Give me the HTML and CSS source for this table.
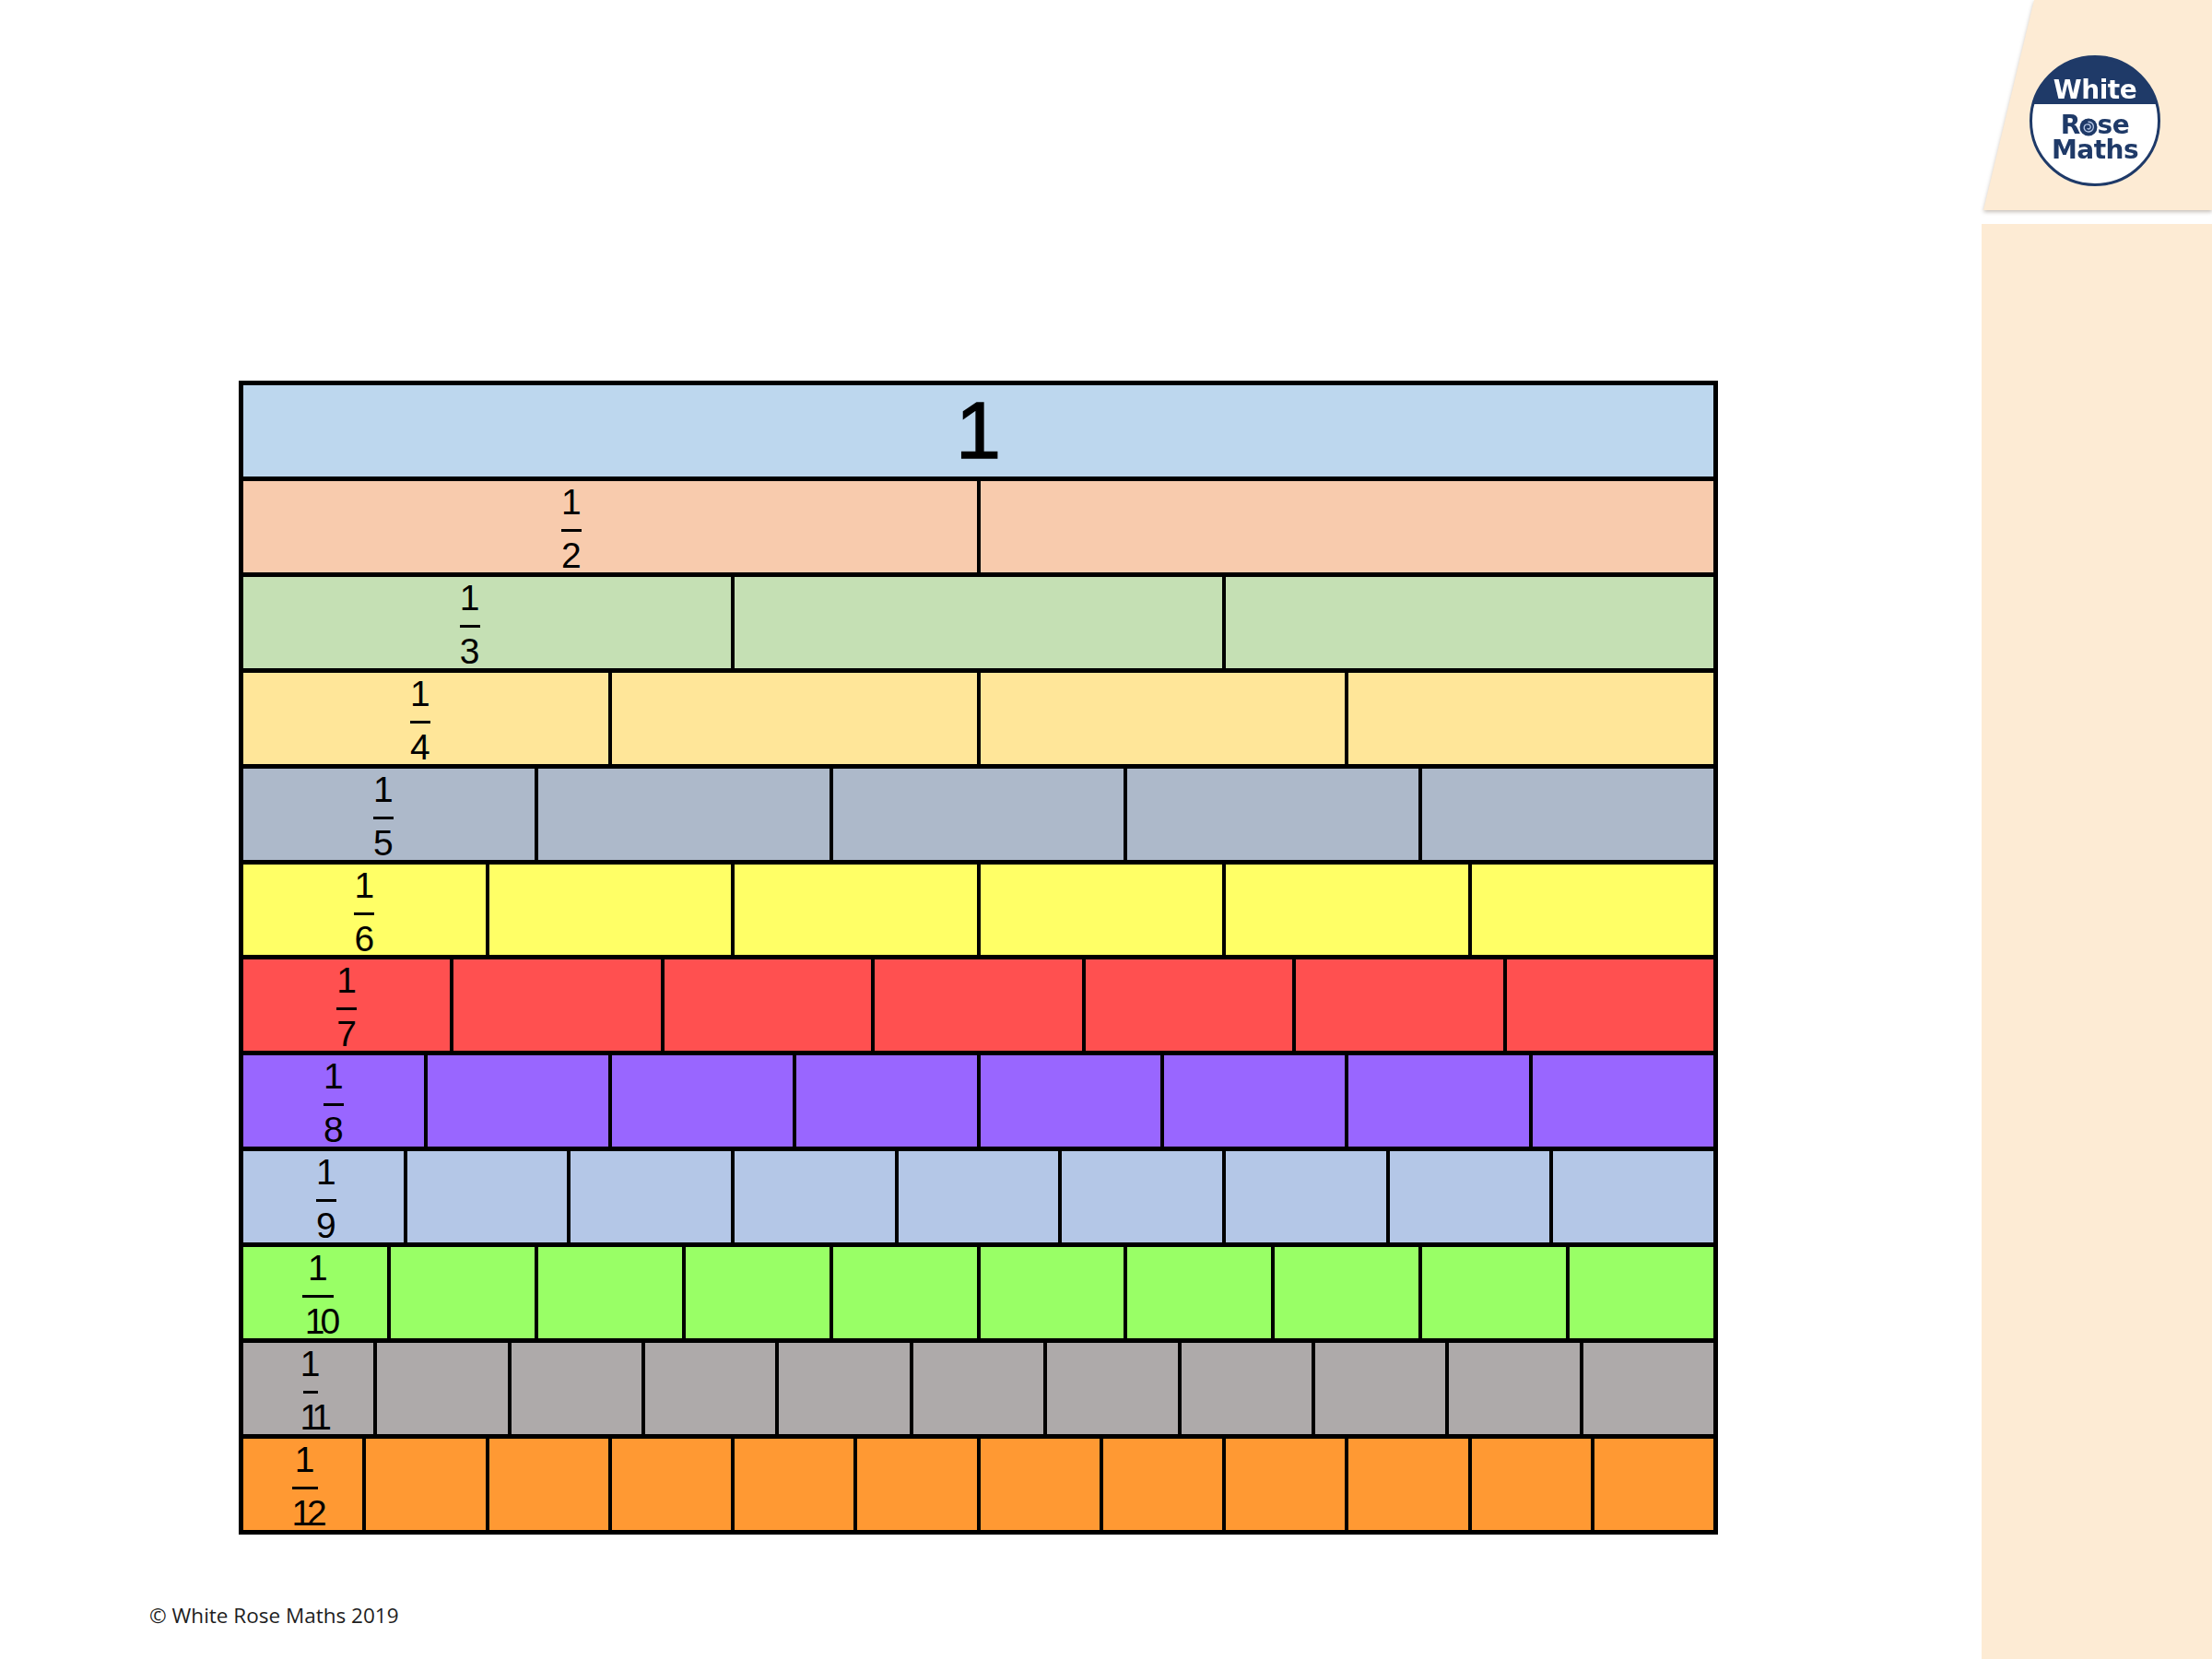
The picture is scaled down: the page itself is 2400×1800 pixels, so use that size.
FILE: index.html
```html
<!DOCTYPE html>
<html lang="en">
<head>
<meta charset="utf-8">
<title>Fraction Wall</title>
<link rel="stylesheet" href="styles.css">
</head>
<body>
<div class="page">
  <main class="main">
    <div class="wall">
      <div class="row r1"><div class="cell"><span class="one">1</span></div></div>
      <div class="row r2">
        <div class="cell"><span class="frac"><span class="num">1</span><span class="bar"></span><span class="den">2</span></span></div>
        <div class="cell"></div>
      </div>
      <div class="row r3">
        <div class="cell"><span class="frac"><span class="num">1</span><span class="bar"></span><span class="den">3</span></span></div>
        <div class="cell"></div><div class="cell"></div>
      </div>
      <div class="row r4">
        <div class="cell"><span class="frac"><span class="num">1</span><span class="bar"></span><span class="den">4</span></span></div>
        <div class="cell"></div><div class="cell"></div><div class="cell"></div>
      </div>
      <div class="row r5">
        <div class="cell"><span class="frac"><span class="num">1</span><span class="bar"></span><span class="den">5</span></span></div>
        <div class="cell"></div><div class="cell"></div><div class="cell"></div><div class="cell"></div>
      </div>
      <div class="row r6">
        <div class="cell"><span class="frac"><span class="num">1</span><span class="bar"></span><span class="den">6</span></span></div>
        <div class="cell"></div><div class="cell"></div><div class="cell"></div><div class="cell"></div><div class="cell"></div>
      </div>
      <div class="row r7">
        <div class="cell"><span class="frac"><span class="num">1</span><span class="bar"></span><span class="den">7</span></span></div>
        <div class="cell"></div><div class="cell"></div><div class="cell"></div><div class="cell"></div><div class="cell"></div><div class="cell"></div>
      </div>
      <div class="row r8">
        <div class="cell"><span class="frac"><span class="num">1</span><span class="bar"></span><span class="den">8</span></span></div>
        <div class="cell"></div><div class="cell"></div><div class="cell"></div><div class="cell"></div><div class="cell"></div><div class="cell"></div><div class="cell"></div>
      </div>
      <div class="row r9">
        <div class="cell"><span class="frac"><span class="num">1</span><span class="bar"></span><span class="den">9</span></span></div>
        <div class="cell"></div><div class="cell"></div><div class="cell"></div><div class="cell"></div><div class="cell"></div><div class="cell"></div><div class="cell"></div><div class="cell"></div>
      </div>
      <div class="row r10">
        <div class="cell"><span class="frac"><span class="num">1</span><span class="bar"></span><span class="den">10</span></span></div>
        <div class="cell"></div><div class="cell"></div><div class="cell"></div><div class="cell"></div><div class="cell"></div><div class="cell"></div><div class="cell"></div><div class="cell"></div><div class="cell"></div>
      </div>
      <div class="row r11">
        <div class="cell"><span class="frac"><span class="num">1</span><span class="bar"></span><span class="den">11</span></span></div>
        <div class="cell"></div><div class="cell"></div><div class="cell"></div><div class="cell"></div><div class="cell"></div><div class="cell"></div><div class="cell"></div><div class="cell"></div><div class="cell"></div><div class="cell"></div>
      </div>
      <div class="row r12">
        <div class="cell"><span class="frac"><span class="num">1</span><span class="bar"></span><span class="den">12</span></span></div>
        <div class="cell"></div><div class="cell"></div><div class="cell"></div><div class="cell"></div><div class="cell"></div><div class="cell"></div><div class="cell"></div><div class="cell"></div><div class="cell"></div><div class="cell"></div><div class="cell"></div>
      </div>
    </div>
    <p class="copyright">© White Rose Maths 2019</p>
  </main>
  <aside class="panel">
    <div class="panel-top-wrap">
      <div class="panel-top">
        <div class="logo">
          <span class="logo-white">White</span>
          <span class="logo-rest">Rose Maths</span>
          <svg class="rose" width="20" height="20" viewBox="0 0 20 20" aria-hidden="true">
            <circle cx="10" cy="10" r="9.5" fill="#1f3a68"/>
            <path d="M10 4.2 C14 4.2 15.8 7.5 15.3 10.5 C14.8 13.6 11.8 15.4 9 14.9 C6.3 14.4 4.8 11.8 5.3 9.6 C5.8 7.6 7.9 6.5 10 7 C11.6 7.4 12.6 9 12.1 10.5 C11.7 11.8 10.2 12.3 9.1 11.6" fill="none" stroke="#b3c4e3" stroke-width="1.4" stroke-linecap="round"/>
          </svg>
        </div>
      </div>
    </div>
    <div class="panel-body"></div>
  </aside>
</div>
</body>
</html>
```
FILE: styles.css
```css
html, body {
  margin: 0;
  padding: 0;
  background: #ffffff;
}

.page {
  display: flex;
  width: 2400px;
  height: 1800px;
  overflow: hidden;
}

.main {
  flex: 1 1 auto;
  display: flex;
  flex-direction: column;
  align-items: flex-start;
  padding-top: 413px;
}

/* ---------- fraction wall ---------- */
.wall {
  box-sizing: border-box;
  margin-left: 259px;
  width: 1605px;
  height: 1252px;
  padding: 5px;
  background: #000000;
  display: grid;
  grid-template-rows: repeat(12, 1fr);
  row-gap: 5px;
}

.row {
  display: flex;
  gap: 4px;
  min-height: 0;
}

.cell {
  flex: 1 1 0;
  min-width: 0;
  display: flex;
  justify-content: center;
  align-items: flex-start;
}

.r1 .cell { background: #bdd7ee; align-items: center; }
.r2 .cell { background: #f8cbad; }
.r3 .cell { background: #c5e0b4; }
.r4 .cell { background: #ffe699; }
.r5 .cell { background: #adb9ca; }
.r6 .cell { background: #ffff66; }
.r7 .cell { background: #ff5050; }
.r8 .cell { background: #9966ff; }
.r9 .cell { background: #b4c7e7; }
.r10 .cell { background: #99ff66; }
.r11 .cell { background: #aeaaaa; }
.r12 .cell { background: #ff9933; }

.one {
  font-family: "Liberation Sans", Arial, sans-serif;
  font-weight: 400;
  font-size: 88px;
  line-height: 1;
  color: #000000;
  -webkit-text-stroke: 1.5px #000000;
}

.frac {
  display: flex;
  flex-direction: column;
  align-items: center;
  font-family: "Liberation Sans", Arial, sans-serif;
  font-size: 39px;
  color: #000000;
}

.num, .den {
  display: block;
  height: 28px;
  line-height: 28px;
}

.num { margin-top: 9px; }

.bar {
  display: block;
  width: 22px;
  height: 3px;
  margin-top: 15px;
  background: #000000;
}

.den { margin-top: 12px; }

.r10 .den, .r12 .den { letter-spacing: -5px; margin-right: -5px; }
.r11 .den { letter-spacing: -6px; margin-right: -6px; }
.r10 .bar { width: 34px; }
.r11 .bar { width: 16px; }
.r12 .bar { width: 28px; }

.r2 .frac { margin-right: 84px; }
.r3 .frac { margin-right: 38px; }
.r4 .frac { margin-right: 12px; }
.r5 .frac { margin-right: 12px; }
.r9 .frac { margin-left: 6px; }
.r10 .frac { margin-left: 6px; }
.r11 .frac { margin-left: 4px; }
.r12 .frac { margin-left: 4px; }

.copyright {
  margin: 77px 0 0 162px;
  font-family: "Open Sans", "Liberation Sans", sans-serif;
  font-size: 22.5px;
  line-height: 22px;
  color: #1e1e1e;
}

/* ---------- right panel ---------- */
.panel {
  flex: 0 0 250px;
  display: flex;
  flex-direction: column;
}

.panel-top-wrap {
  filter: drop-shadow(0 2px 2px rgba(90, 70, 50, 0.35));
}

.panel-top {
  height: 228px;
  background: #fdebd4;
  clip-path: polygon(57px 0, 100% 0, 100% 100%, 2px 100%);
  padding-top: 60px;
  padding-left: 52px;
  box-sizing: border-box;
}

.panel-body {
  flex: 1 1 auto;
  margin-top: 15px;
  background: #fdebd4;
}

.logo {
  position: relative;
  box-sizing: border-box;
  width: 142px;
  height: 142px;
  border: 3px solid #1f3a68;
  border-radius: 50%;
  background: linear-gradient(#1f3a68 0, #1f3a68 50px, #ffffff 50px);
  display: flex;
  flex-direction: column;
  align-items: center;
  padding-top: 21px;
  font-family: "DejaVu Sans", sans-serif;
  font-weight: 700;
  font-size: 28px;
  line-height: 27px;
  letter-spacing: -0.5px;
}

.logo-white { color: #ffffff; }

.logo-rest {
  display: block;
  width: 110px;
  margin-top: 11px;
  text-align: center;
  color: #1f3a68;
}

.rose {
  position: absolute;
  left: 51px;
  top: 65px;
}
```
